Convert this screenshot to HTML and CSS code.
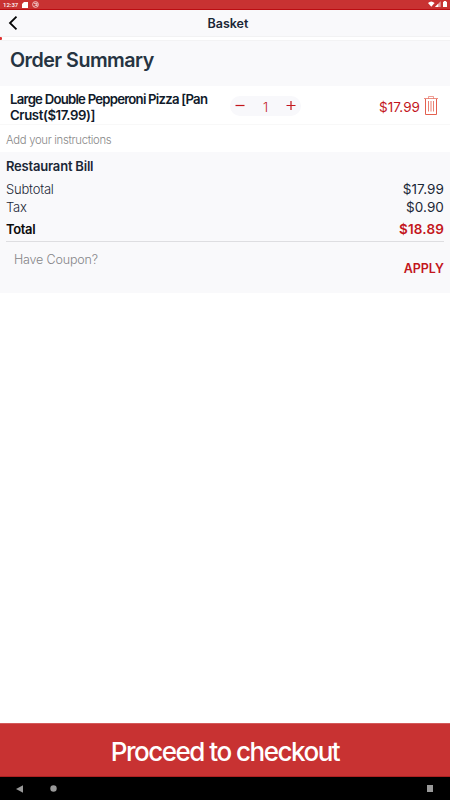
FILE: index.html
```html
<!DOCTYPE html>
<html lang="en">
<head>
<meta charset="utf-8">
<title>Basket</title>
<link rel="stylesheet" href="styles.css">
</head>
<body>
<div class="app">
  <div class="status">
    <span class="clock">12:37</span>
    <svg class="sd" width="6" height="6" viewBox="0 0 6 6"><path d="M2 0h4v6H0V2z" fill="#fff"/></svg>
    <svg width="7" height="7" viewBox="0 0 7 7"><circle cx="3.5" cy="3.5" r="2.9" fill="none" stroke="#f8dada" stroke-width=".8"/><path d="M2 2.3h3v2H3.3L2.4 5.4M4 3.5l1.5 1.8" fill="none" stroke="#f8dada" stroke-width=".9"/></svg>
    <svg class="signals" width="20" height="7" viewBox="0 0 20 7"><path d="M0 2Q3.3-1 6.6 2L3.3 5.7z" fill="#fff"/><path d="M7 6l5.700-5.700V6z" fill="#e7a2a2"/><path d="M7 6l3.200-3.200V6z" fill="#fff"/><path d="M15 .8h1V0h2v.8h1V6h-4z" fill="#fff"/></svg>
  </div>
  <header class="header">
    <svg class="back" width="10" height="14" viewBox="0 0 10 14"><path d="M8.500 .7L2 7l6.500 6.300" fill="none" stroke="#050505" stroke-width="1.800"/></svg>
    <span class="title">Basket</span>
  </header>
  <div class="strip"><i></i></div>
  <h1 class="heading">Order Summary</h1>
  <section class="item">
    <div class="name">Large Double Pepperoni Pizza [Pan<br><span class="crust">Crust($17.99)]</span></div>
    <div class="stepper">
      <svg width="10" height="10" viewBox="0 0 10 10"><path d="M.5 4.500h9" stroke="#c3161c" stroke-width="1.200"/></svg>
      <span>1</span>
      <svg width="10" height="10" viewBox="0 0 10 10"><path d="M.5 4.500h9M5 0v9" stroke="#c3161c" stroke-width="1.200"/></svg>
    </div>
    <span class="price">$17.99</span>
    <svg class="trash" width="14" height="19" viewBox="0 0 14 19"><g fill="none" stroke="#e4604f"><path d="M0 2.500h14" stroke-width="1" opacity=".7"/><path d="M4.500 2.500v-2h5v2" stroke-width=".8" opacity=".75"/><path d="M1.500 3v15.500h11V3" stroke-width="1"/><path d="M4.500 5v10.500M7 5v10.500M9.500 5v10.500" stroke-width=".8"/></g></svg>
  </section>
  <div class="notes">Add your instructions</div>
  <section class="bill">
    <div class="row billhead"><span>Restaurant Bill</span></div>
    <div class="row"><span class="label">Subtotal</span><span class="amount">$17.99</span></div>
    <div class="row"><span class="label">Tax</span><span class="amount">$0.90</span></div>
    <div class="row total"><span class="label">Total</span><span class="sum">$18.89</span></div>
    <div class="coupon"><span class="hint">Have Coupon?</span><span class="apply">APPLY</span></div>
  </section>
  <div class="space"></div>
  <div class="checkout"><span>Proceed to checkout</span></div>
  <nav class="nav">
    <svg width="7" height="8" viewBox="0 0 7 8"><path d="M0 4l7-3.700v7.400z" fill="#999"/></svg>
    <svg class="home" width="7" height="7" viewBox="0 0 7 7"><circle cx="3.500" cy="3.500" r="3.200" fill="#999"/></svg>
    <i class="recent"></i>
  </nav>
</div>
</body>
</html>
```
FILE: styles.css
```css
* { box-sizing: border-box; }
body { margin: 0; background: #fff; color: #1b2736; font-family: Inter, "Liberation Sans", sans-serif; }
svg { display: block; flex: none; }
.app { width: 450px; height: 800px; display: flex; flex-direction: column; overflow: hidden; }
.app > * { flex: none; }
.app > .space { flex: 1; }
.status { height: 10px; display: flex; align-items: center; padding: 0 2px 0 3px; background: #c83232; border-bottom: 1px solid #bb0d12; }
.clock { width: 19px; font: 500 6px/8px Roboto, sans-serif; color: #fff; }
.sd { margin-right: 4px; }
.signals { margin-left: auto; }
.header { height: 27px; display: flex; align-items: center; background: #f9f9fb; border-bottom: 1px solid #f2f2f3; }
.back { margin-left: 8px; }
.title { margin-left: 189.500px; font-size: 12.500px; font-weight: 600; line-height: 20px; padding-top: 2px; }
.strip { height: 4px; background: #fff; border-bottom: 1px solid #f3f3f4; }
.strip i { display: block; width: 2px; height: 3px; background: #df3434; border-radius: 0 1px 1px 0; }
.heading { height: 45px; margin: 0; padding: 7px 10px 0; background: #f9f9fb; font-size: 19.700px; font-weight: 600; line-height: 24px; letter-spacing: -.52px; color: #263442; }
.item { height: 39px; display: flex; align-items: center; padding: 0 12px 0 10px; border-bottom: 1px solid #f8f8f8; }
.name { width: 220px; padding-top: 3px; font-size: 13.200px; line-height: 16px; font-weight: 600; letter-spacing: -.78px; color: #101a2a; white-space: nowrap; }
.crust { letter-spacing: -.4px; }
.stepper { width: 71px; height: 20px; margin-top: 2px; display: flex; align-items: center; justify-content: space-between; padding: 0 5px; border-radius: 10px; background: #f8f8fb; color: #c3161c; font-size: 13px; line-height: 20px; }
.stepper span { padding-top: 1px; font-weight: 300; }
.price { margin-left: auto; padding-top: 3px; font-size: 13.500px; line-height: 16px; letter-spacing: .06px; color: #c3161c; }
.trash { margin-left: 4px; }
.notes { height: 27px; padding: 6px 6px 0; font-size: 11.300px; line-height: 18px; font-weight: 300; letter-spacing: -.3px; color: #888; }
.bill { height: 141px; padding: 0 6px; background: #f9f9fb; }
.row { height: 18px; display: flex; justify-content: space-between; align-items: center; font-size: 13px; line-height: 18px; font-weight: 300; }
.label { letter-spacing: -.2px; }
.amount { font-size: 13.500px; font-weight: 400; letter-spacing: .1px; }
.billhead { height: 28px; font-weight: 600; letter-spacing: -.2px; }
.total { height: 25px; color: #0b0b0b; font-weight: 600; }
.total .label { letter-spacing: -.35px; }
.sum, .apply { color: #c3161c; font-weight: 600; }
.sum { font-size: 13.500px; letter-spacing: .16px; }
.coupon { height: 50px; display: flex; justify-content: space-between; padding: 8px 0 0 8px; border-top: 1px solid #dedee1; font-size: 12.500px; line-height: 19px; }
.hint { color: #858588; font-weight: 300; letter-spacing: -.17px; }
.apply { margin-top: 9px; }
.checkout { height: 54px; padding-top: 4px; display: flex; align-items: center; justify-content: center; background: #c83232; border-top: 1px solid #d35a5a; border-bottom: 1px solid #ac2020; color: #fff; font-size: 26px; line-height: 32px; font-weight: 500; letter-spacing: -1.500px; }
.nav { height: 23px; display: flex; align-items: center; padding: 0 17px 0 16px; background: #000; }
.home { margin-left: 27px; }
.recent { width: 6px; height: 7px; margin-left: auto; background: #999; }
```
